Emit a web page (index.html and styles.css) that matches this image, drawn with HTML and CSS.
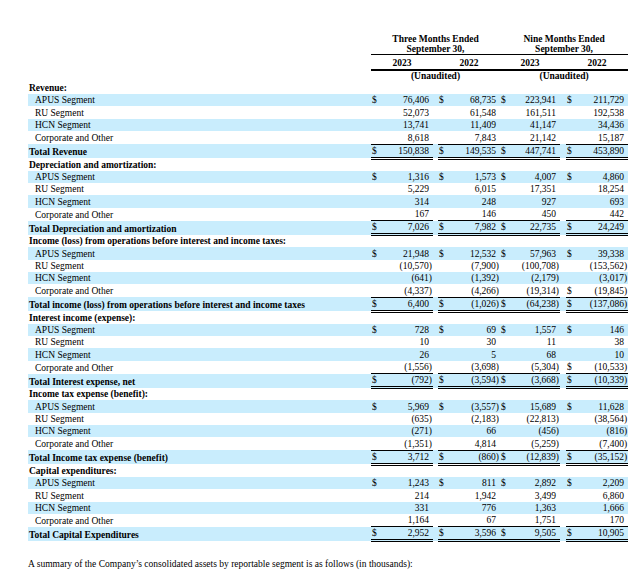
FILE: index.html
```html
<!DOCTYPE html>
<html lang="en">
<head>
  <meta charset="UTF-8">
  <meta name="viewport" content="width=device-width, initial-scale=1.0">
  <title>Segment information</title>
  <link rel="stylesheet" href="styles.css">
</head>
<body>

  <table class="seg">
    <colgroup>
      <col class="w-lb"><col class="w-d"><col class="w-n"><col class="w-g"><col class="w-d"><col class="w-n">
      <col class="w-d3"><col class="w-n3"><col class="w-g4"><col class="w-d"><col class="w-n">
    </colgroup>

    <!-- column headings -->
    <tr class="h1">
      <td></td>
      <td colspan="5" class="ct">Three Months Ended<br>September 30,</td>
      <td colspan="5" class="ct">Nine Months Ended<br>September 30,</td>
    </tr>
    <tr class="h2">
      <td></td>
      <td colspan="2" class="ct">2023</td><td class="ul"></td><td colspan="2" class="ct">2022</td>
      <td colspan="2" class="ct">2023</td><td class="ul"></td><td colspan="2" class="ct">2022</td>
    </tr>
    <tr class="h3">
      <td></td>
      <td colspan="5" class="ct">(Unaudited)</td>
      <td colspan="5" class="ct">(Unaudited)</td>
    </tr>

    <!-- Revenue -->
    <tr class="hd"><td colspan="11">Revenue:</td></tr>
    <tr class="r b"><td class="lb">APUS Segment</td><td class="d">$</td><td class="n">76,406</td><td></td><td class="d">$</td><td class="n">68,735</td><td class="d">$</td><td class="n">223,941</td><td></td><td class="d">$</td><td class="n">211,729</td></tr>
    <tr class="r"><td class="lb">RU Segment</td><td class="d"></td><td class="n">52,073</td><td></td><td class="d"></td><td class="n">61,548</td><td class="d"></td><td class="n">161,511</td><td></td><td class="d"></td><td class="n">192,538</td></tr>
    <tr class="r b"><td class="lb">HCN Segment</td><td class="d"></td><td class="n">13,741</td><td></td><td class="d"></td><td class="n">11,409</td><td class="d"></td><td class="n">41,147</td><td></td><td class="d"></td><td class="n">34,436</td></tr>
    <tr class="r"><td class="lb">Corporate and Other</td><td class="d"></td><td class="n">8,618</td><td></td><td class="d"></td><td class="n">7,843</td><td class="d"></td><td class="n">21,142</td><td></td><td class="d"></td><td class="n">15,187</td></tr>
    <tr class="t b"><td class="tl">Total Revenue</td><td class="d">$</td><td class="n">150,838</td><td></td><td class="d">$</td><td class="n">149,535</td><td class="d">$</td><td class="n">447,741</td><td></td><td class="d">$</td><td class="n">453,890</td></tr>

    <!-- Depreciation -->
    <tr class="hd"><td colspan="11">Depreciation and amortization:</td></tr>
    <tr class="r b"><td class="lb">APUS Segment</td><td class="d">$</td><td class="n">1,316</td><td></td><td class="d">$</td><td class="n">1,573</td><td class="d">$</td><td class="n">4,007</td><td></td><td class="d">$</td><td class="n">4,860</td></tr>
    <tr class="r"><td class="lb">RU Segment</td><td class="d"></td><td class="n">5,229</td><td></td><td class="d"></td><td class="n">6,015</td><td class="d"></td><td class="n">17,351</td><td></td><td class="d"></td><td class="n">18,254</td></tr>
    <tr class="r b"><td class="lb">HCN Segment</td><td class="d"></td><td class="n">314</td><td></td><td class="d"></td><td class="n">248</td><td class="d"></td><td class="n">927</td><td></td><td class="d"></td><td class="n">693</td></tr>
    <tr class="r"><td class="lb">Corporate and Other</td><td class="d"></td><td class="n">167</td><td></td><td class="d"></td><td class="n">146</td><td class="d"></td><td class="n">450</td><td></td><td class="d"></td><td class="n">442</td></tr>
    <tr class="t b"><td class="tl">Total Depreciation and amortization</td><td class="d">$</td><td class="n">7,026</td><td></td><td class="d">$</td><td class="n">7,982</td><td class="d">$</td><td class="n">22,735</td><td></td><td class="d">$</td><td class="n">24,249</td></tr>

    <!-- Income (loss) from operations -->
    <tr class="hd"><td colspan="11">Income (loss) from operations before interest and income taxes:</td></tr>
    <tr class="r b"><td class="lb">APUS Segment</td><td class="d">$</td><td class="n">21,948</td><td></td><td class="d">$</td><td class="n">12,532</td><td class="d">$</td><td class="n">57,963</td><td></td><td class="d">$</td><td class="n">39,338</td></tr>
    <tr class="r"><td class="lb">RU Segment</td><td class="d"></td><td class="n ng">(10,570)</td><td></td><td class="d"></td><td class="n ng">(7,900)</td><td class="d"></td><td class="n ng">(100,708)</td><td></td><td class="d"></td><td class="n ng">(153,562)</td></tr>
    <tr class="r b"><td class="lb">HCN Segment</td><td class="d"></td><td class="n ng">(641)</td><td></td><td class="d"></td><td class="n ng">(1,392)</td><td class="d"></td><td class="n ng">(2,179)</td><td></td><td class="d"></td><td class="n ng">(3,017)</td></tr>
    <tr class="r"><td class="lb">Corporate and Other</td><td class="d"></td><td class="n ng">(4,337)</td><td></td><td class="d"></td><td class="n ng">(4,266)</td><td class="d"></td><td class="n ng">(19,314)</td><td></td><td class="d">$</td><td class="n ng">(19,845)</td></tr>
    <tr class="t b"><td class="tl">Total income (loss) from operations before interest and income taxes</td><td class="d">$</td><td class="n">6,400</td><td></td><td class="d">$</td><td class="n ng">(1,026)</td><td class="d">$</td><td class="n ng">(64,238)</td><td></td><td class="d">$</td><td class="n ng">(137,086)</td></tr>

    <!-- Interest -->
    <tr class="hd"><td colspan="11">Interest income (expense):</td></tr>
    <tr class="r b"><td class="lb">APUS Segment</td><td class="d">$</td><td class="n">728</td><td></td><td class="d">$</td><td class="n">69</td><td class="d">$</td><td class="n">1,557</td><td></td><td class="d">$</td><td class="n">146</td></tr>
    <tr class="r"><td class="lb">RU Segment</td><td class="d"></td><td class="n">10</td><td></td><td class="d"></td><td class="n">30</td><td class="d"></td><td class="n">11</td><td></td><td class="d"></td><td class="n">38</td></tr>
    <tr class="r b"><td class="lb">HCN Segment</td><td class="d"></td><td class="n">26</td><td></td><td class="d"></td><td class="n">5</td><td class="d"></td><td class="n">68</td><td></td><td class="d"></td><td class="n">10</td></tr>
    <tr class="r"><td class="lb">Corporate and Other</td><td class="d"></td><td class="n ng">(1,556)</td><td></td><td class="d"></td><td class="n ng">(3,698)</td><td class="d"></td><td class="n ng">(5,304)</td><td></td><td class="d">$</td><td class="n ng">(10,533)</td></tr>
    <tr class="t b"><td class="tl">Total Interest expense, net</td><td class="d">$</td><td class="n ng">(792)</td><td></td><td class="d">$</td><td class="n ng">(3,594)</td><td class="d">$</td><td class="n ng">(3,668)</td><td></td><td class="d">$</td><td class="n ng">(10,339)</td></tr>

    <!-- Income tax -->
    <tr class="hd"><td colspan="11">Income tax expense (benefit):</td></tr>
    <tr class="r b"><td class="lb">APUS Segment</td><td class="d">$</td><td class="n">5,969</td><td></td><td class="d">$</td><td class="n ng">(3,557)</td><td class="d">$</td><td class="n">15,689</td><td></td><td class="d">$</td><td class="n">11,628</td></tr>
    <tr class="r"><td class="lb">RU Segment</td><td class="d"></td><td class="n ng">(635)</td><td></td><td class="d"></td><td class="n ng">(2,183)</td><td class="d"></td><td class="n ng">(22,813)</td><td></td><td class="d"></td><td class="n ng">(38,564)</td></tr>
    <tr class="r b"><td class="lb">HCN Segment</td><td class="d"></td><td class="n ng">(271)</td><td></td><td class="d"></td><td class="n">66</td><td class="d"></td><td class="n ng">(456)</td><td></td><td class="d"></td><td class="n ng">(816)</td></tr>
    <tr class="r"><td class="lb">Corporate and Other</td><td class="d"></td><td class="n ng">(1,351)</td><td></td><td class="d"></td><td class="n">4,814</td><td class="d"></td><td class="n ng">(5,259)</td><td></td><td class="d"></td><td class="n ng">(7,400)</td></tr>
    <tr class="t b"><td class="tl">Total Income tax expense (benefit)</td><td class="d">$</td><td class="n">3,712</td><td></td><td class="d">$</td><td class="n ng">(860)</td><td class="d">$</td><td class="n ng">(12,839)</td><td></td><td class="d">$</td><td class="n ng">(35,152)</td></tr>

    <!-- Capital expenditures -->
    <tr class="hd"><td colspan="11">Capital expenditures:</td></tr>
    <tr class="r b"><td class="lb">APUS Segment</td><td class="d">$</td><td class="n">1,243</td><td></td><td class="d">$</td><td class="n">811</td><td class="d">$</td><td class="n">2,892</td><td></td><td class="d">$</td><td class="n">2,209</td></tr>
    <tr class="r"><td class="lb">RU Segment</td><td class="d"></td><td class="n">214</td><td></td><td class="d"></td><td class="n">1,942</td><td class="d"></td><td class="n">3,499</td><td></td><td class="d"></td><td class="n">6,860</td></tr>
    <tr class="r b"><td class="lb">HCN Segment</td><td class="d"></td><td class="n">331</td><td></td><td class="d"></td><td class="n">776</td><td class="d"></td><td class="n">1,363</td><td></td><td class="d"></td><td class="n">1,666</td></tr>
    <tr class="r"><td class="lb">Corporate and Other</td><td class="d"></td><td class="n">1,164</td><td></td><td class="d"></td><td class="n">67</td><td class="d"></td><td class="n">1,751</td><td></td><td class="d"></td><td class="n">170</td></tr>
    <tr class="t b"><td class="tl">Total Capital Expenditures</td><td class="d">$</td><td class="n">2,952</td><td></td><td class="d">$</td><td class="n">3,596</td><td class="d">$</td><td class="n">9,505</td><td></td><td class="d">$</td><td class="n">10,905</td></tr>
  </table>

  <p class="note">A summary of the Company’s consolidated assets by reportable segment is as follows (in thousands):</p>

</body>
</html>
```

FILE: styles.css
```css
body {
  font-family: "Liberation Serif", "Times New Roman", serif;
  font-size: 9.5px;
  color: #000;
  background-color: #fff;
  margin: 0;
  padding: 0;
}

/* segment table */
.seg {
  width: 600px;
  margin: 34px 0 0 28px;
  border-collapse: collapse;
  table-layout: fixed;
}

.w-lb { width: 343px; }
.w-d { width: 12px; }
.w-n { width: 50px; }
.w-g { width: 5px; }
.w-d3 { width: 8px; }
.w-n3 { width: 52px; }
.w-g4 { width: 6px; }

.seg td {
  padding: 0;
  white-space: nowrap;
  vertical-align: bottom;
}

/* heading rows */
.ct {
  text-align: center;
  font-weight: bold;
}

.h1 td {
  line-height: 10px;
}

.h1 td + td {
  border-bottom: 1px solid #000;
}

.h2 td {
  line-height: 11px;
  padding-top: 3px;
}

.h2 td + td {
  border-bottom: 2px solid #000;
}

.h3 td {
  height: 12px;
  line-height: 11px;
  vertical-align: top;
}

/* section rows */
.hd td {
  height: 11px;
  line-height: 11px;
  font-weight: bold;
  padding-left: 1px;
}

.r td {
  height: 12.4px;
  line-height: 12px;
}

.t td {
  height: 12px;
  line-height: 12px;
}

.b {
  background-color: #c9edfd;
}

.lb {
  padding-left: 7px !important;
}

.tl {
  font-weight: bold;
  padding-left: 1px !important;
}

.d {
  padding-left: 1px !important;
}

.n {
  text-align: right;
  padding-right: 4px !important;
}

.n.ng {
  padding-right: 1px !important;
}

/* rules above and below totals */
.t .d, .t .n {
  border-top: 1px solid #000;
  border-bottom: 3px double #000;
}

.note {
  margin: 16px 0 0 28px;
  line-height: 12px;
}
```
